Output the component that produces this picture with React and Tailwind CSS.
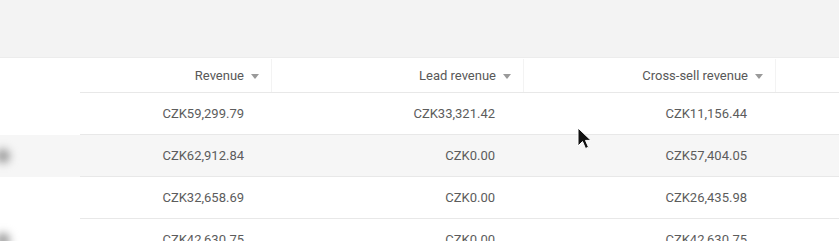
import React from 'react';

const rows = [
  { revenue: 'CZK59,299.79', lead: 'CZK33,321.42', cross: 'CZK11,156.44', bg: 'bg-white', blob: false },
  { revenue: 'CZK62,912.84', lead: 'CZK0.00', cross: 'CZK57,404.05', bg: 'bg-[#f6f6f6]', blob: true },
  { revenue: 'CZK32,658.69', lead: 'CZK0.00', cross: 'CZK26,435.98', bg: 'bg-white', blob: false },
  { revenue: 'CZK42,630.75', lead: 'CZK0.00', cross: 'CZK42,630.75', bg: 'bg-white', blob: true },
];

const SortArrow = () => (
  <svg width="8" height="5" viewBox="0 0 8 5" className="ml-[7px] mt-[1px]">
    <path d="M0 0h8L4 5z" fill="#9a9a9a" />
  </svg>
);

const HeaderCell = ({ label, className = '' }) => (
  <div className={`flex items-center justify-end pr-[12px] border-r border-[#f3f3f3] ${className}`}>
    <span>{label}</span>
    <SortArrow />
  </div>
);

const App = () => {
  return (
    <div
      className="relative w-[839px] h-[241px] overflow-hidden bg-white text-[13px] text-[#5c5c5c]"
      style={{ fontFamily: 'Roboto, "Liberation Sans", sans-serif' }}
    >
      {/* top toolbar area */}
      <div className="h-[58px] bg-[#f3f3f3] border-b border-[#ececec]" />

      {/* header */}
      <div className="flex h-[35px] bg-white text-[#585858]">
        <div className="w-[80px]" />
        <div className="flex flex-1 pt-[1px] border-b border-[#e8e8e8]">
          <HeaderCell label="Revenue" className="w-[192px]" />
          <HeaderCell label="Lead revenue" className="w-[252px]" />
          <HeaderCell label="Cross-sell revenue" className="w-[252px]" />
          <div className="flex-1" />
        </div>
      </div>

      {rows.map((r, i) => (
        <div key={i} className={`flex h-[42px] ${r.bg}`}>
          <div className="w-[80px] flex items-center">
            {r.blob && <div className="w-[14px] h-[14px] -ml-[4px] rounded-full bg-[#9a9a9a] blur-[4px]" />}
          </div>
          <div className="flex flex-1 items-center pt-[1px] border-b border-[#e8e8e8]">
            <div className="w-[192px] text-right pr-[28px]">{r.revenue}</div>
            <div className="w-[252px] text-right pr-[29px]">{r.lead}</div>
            <div className="w-[252px] text-right pr-[29px]">{r.cross}</div>
            <div className="flex-1" />
          </div>
        </div>
      ))}

      {/* mouse cursor */}
      <svg
        className="absolute left-[577px] top-[127px]"
        width="14"
        height="24"
        viewBox="0 0 14 24"
      >
        <path d="M1 1v18l4.5-4.5 3 7 3-1.3-3-6.8H14z" fill="#111" stroke="#fff" strokeWidth="1" />
      </svg>
    </div>
  );
};

export default App;
